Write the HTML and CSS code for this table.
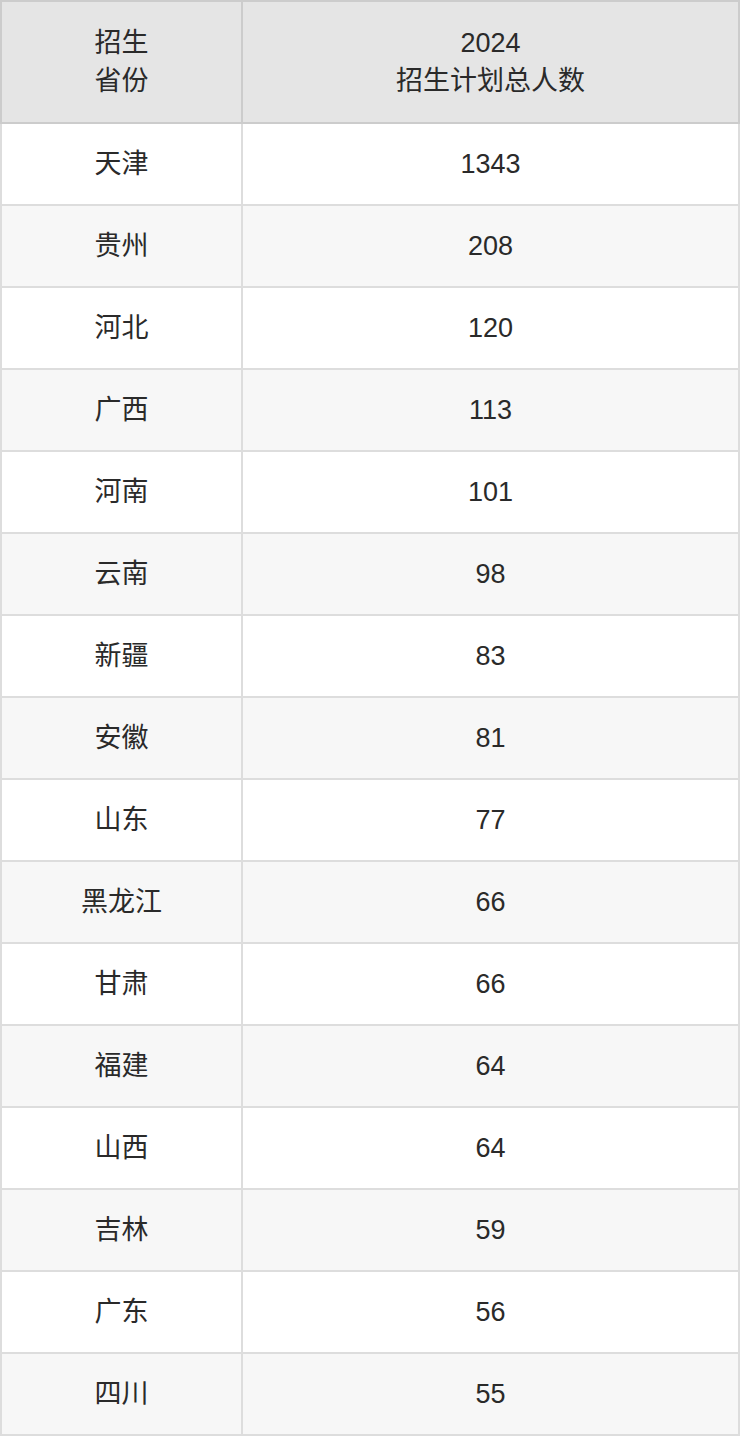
FILE: index.html
```html
<!DOCTYPE html>
<html lang="zh">
<head>
<meta charset="utf-8">
<link rel="stylesheet" href="styles.css">
</head>
<body>
<div class="table">
  <div class="cell head first">招生<br>省份</div>
  <div class="cell head">2024<br>招生计划总人数</div>
  <div class="cell first">天津</div><div class="cell">1343</div>
  <div class="cell first alt">贵州</div><div class="cell alt">208</div>
  <div class="cell first">河北</div><div class="cell">120</div>
  <div class="cell first alt">广西</div><div class="cell alt">113</div>
  <div class="cell first">河南</div><div class="cell">101</div>
  <div class="cell first alt">云南</div><div class="cell alt">98</div>
  <div class="cell first">新疆</div><div class="cell">83</div>
  <div class="cell first alt">安徽</div><div class="cell alt">81</div>
  <div class="cell first">山东</div><div class="cell">77</div>
  <div class="cell first alt">黑龙江</div><div class="cell alt">66</div>
  <div class="cell first">甘肃</div><div class="cell">66</div>
  <div class="cell first alt">福建</div><div class="cell alt">64</div>
  <div class="cell first">山西</div><div class="cell">64</div>
  <div class="cell first alt">吉林</div><div class="cell alt">59</div>
  <div class="cell first">广东</div><div class="cell">56</div>
  <div class="cell first alt">四川</div><div class="cell alt">55</div>
</div>
</body>
</html>
```

FILE: styles.css
```css
html, body {
  margin: 0;
  padding: 0;
  background: #ffffff;
}
.table {
  display: grid;
  grid-template-columns: 243px 497px;
  width: 740px;
  font-family: "Liberation Sans", "Noto Sans CJK SC", sans-serif;
  font-size: 27px;
  color: #2a2a2a;
}
.cell {
  box-sizing: border-box;
  height: 82px;
  display: flex;
  align-items: center;
  justify-content: center;
  text-align: center;
  border-right: 2px solid #dddddd;
  border-bottom: 2px solid #dddddd;
  background: #ffffff;
  line-height: 38px;
}
.cell.first {
  border-left: 2px solid #dddddd;
}
.cell.alt {
  background: #f7f7f7;
}
.cell.head {
  height: 124px;
  background: #e5e5e5;
  border-top: 2px solid #cccccc;
  border-right-color: #cccccc;
  border-bottom-color: #cccccc;
}
.cell.head.first {
  border-left-color: #cccccc;
}
```
